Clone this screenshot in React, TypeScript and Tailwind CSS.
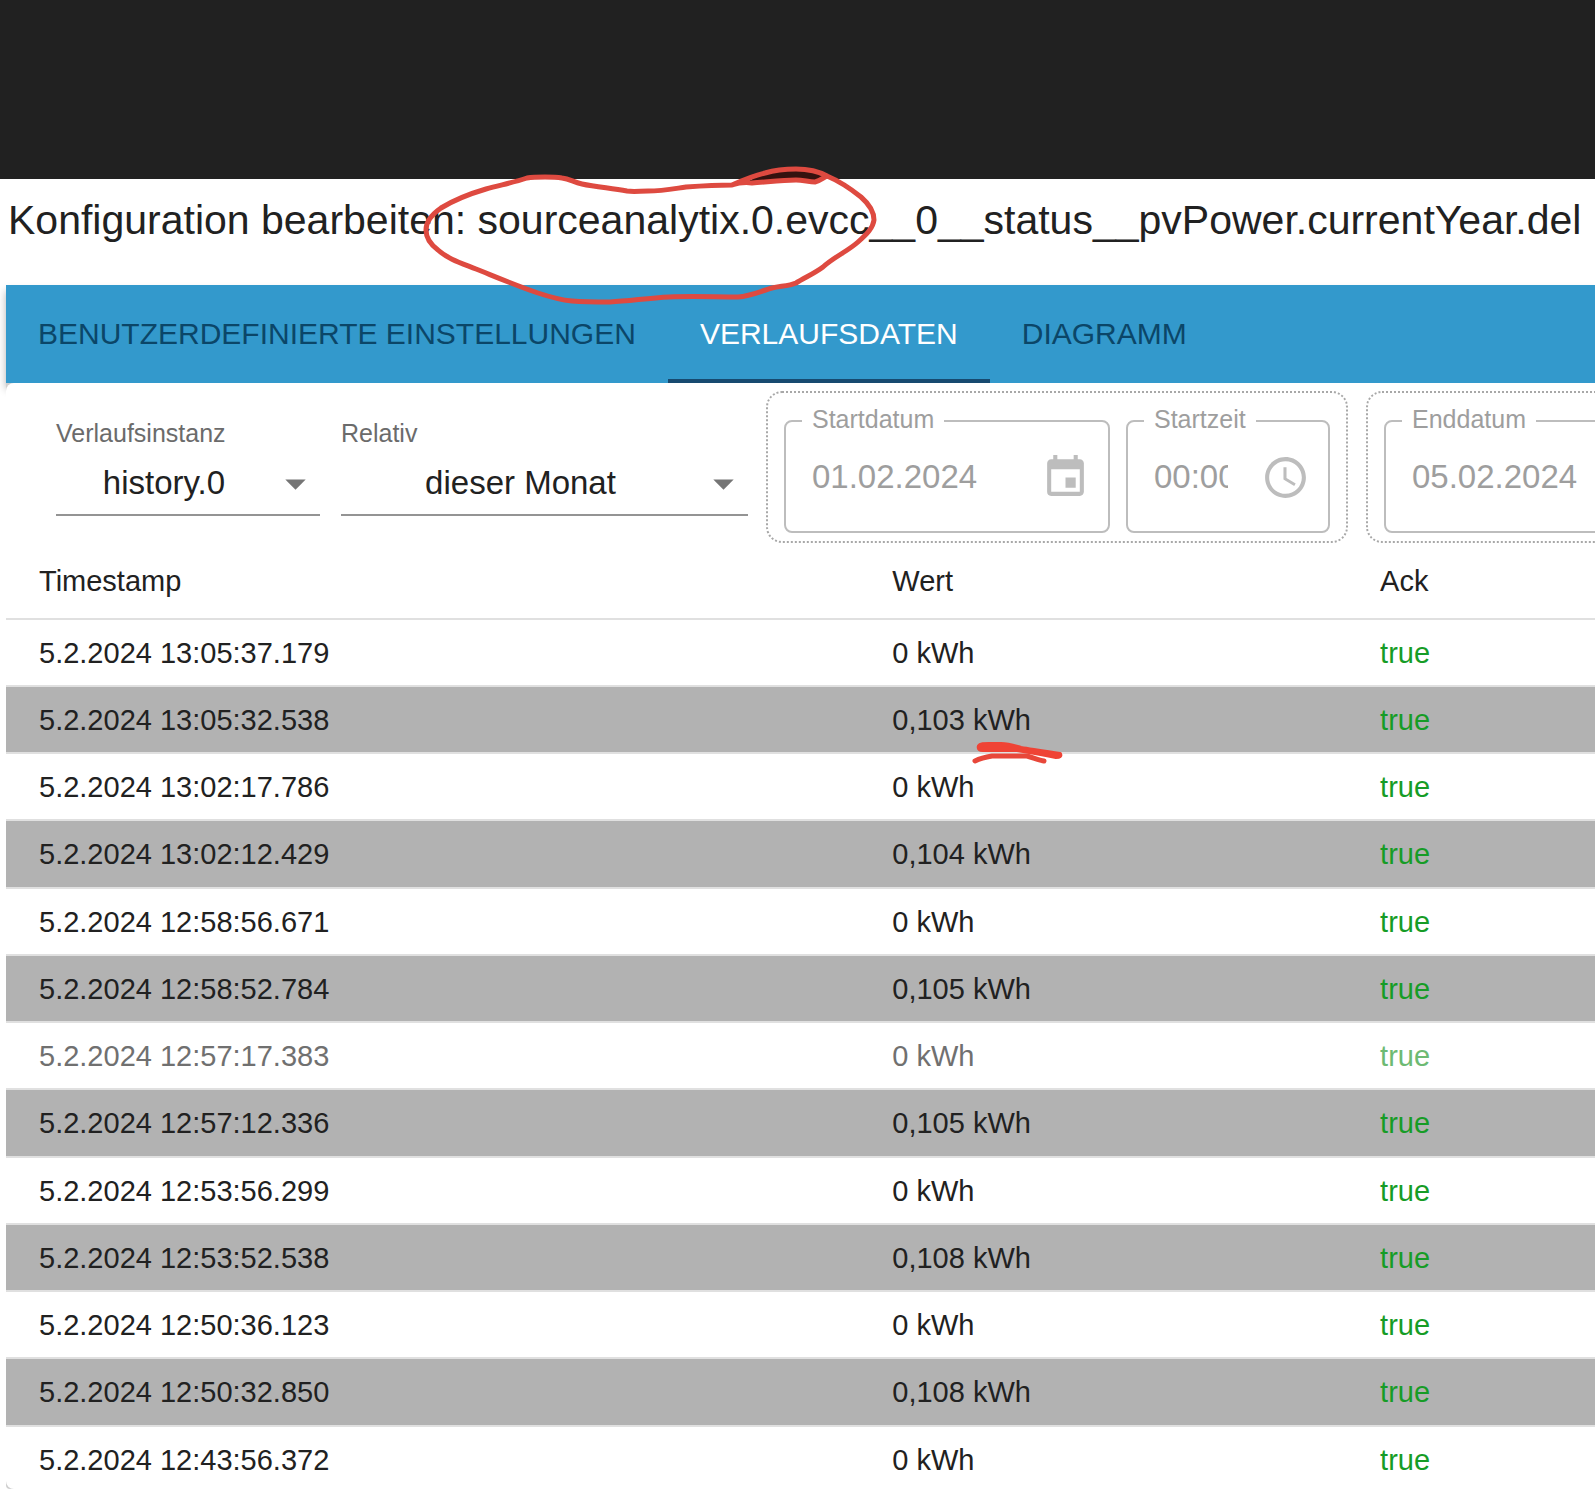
import type { ReactNode } from 'react'
import { MdAccessTime, MdArrowDropDown, MdEvent } from 'react-icons/md'

const tabs = ['BENUTZERDEFINIERTE EINSTELLUNGEN', 'VERLAUFSDATEN', 'DIAGRAMM']

const rows = [
  { ts: '5.2.2024 13:05:37.179', value: '0 kWh' },
  { ts: '5.2.2024 13:05:32.538', value: '0,103 kWh' },
  { ts: '5.2.2024 13:02:17.786', value: '0 kWh' },
  { ts: '5.2.2024 13:02:12.429', value: '0,104 kWh' },
  { ts: '5.2.2024 12:58:56.671', value: '0 kWh' },
  { ts: '5.2.2024 12:58:52.784', value: '0,105 kWh' },
  { ts: '5.2.2024 12:57:17.383', value: '0 kWh', faded: true },
  { ts: '5.2.2024 12:57:12.336', value: '0,105 kWh' },
  { ts: '5.2.2024 12:53:56.299', value: '0 kWh' },
  { ts: '5.2.2024 12:53:52.538', value: '0,108 kWh' },
  { ts: '5.2.2024 12:50:36.123', value: '0 kWh' },
  { ts: '5.2.2024 12:50:32.850', value: '0,108 kWh' },
  { ts: '5.2.2024 12:43:56.372', value: '0 kWh' },
]

function SelectField({ id, label, value, className }: { id: string; label: string; value: string; className: string }) {
  return (
    <div className={`shrink-0 pt-7 ${className}`}>
      <label htmlFor={id} className="block text-[25px] leading-7 text-[#6b6b6b]">
        {label}
      </label>
      <div className="relative">
        <select
          id={id}
          className="block h-[69px] w-full appearance-none border-b-2 border-[#949494] bg-transparent pt-1 pr-12 text-center text-[33px] text-[#212121] outline-none"
        >
          <option>{value}</option>
        </select>
        <MdArrowDropDown size={49} className="pointer-events-none absolute top-3 right-0 text-[#757575]" />
      </div>
    </div>
  )
}

function PickerField({ id, label, value, inputClass, children }: {
  id: string
  label: string
  value: string
  inputClass: string
  children: ReactNode
}) {
  return (
    <fieldset className="shrink-0 rounded-lg border-2 border-[#bdbdbd] pr-[18px] pb-[14px] pl-0">
      <legend className="ml-4 px-[10px] pb-1 text-[25px] leading-7 text-[#9e9e9e]">
        <label htmlFor={id}>{label}</label>
      </legend>
      <div className="flex h-20 items-center pl-[26px]">
        <input
          id={id}
          type="text"
          defaultValue={value}
          disabled
          className={`bg-transparent text-[33px] leading-10 text-[#9e9e9e] ${inputClass}`}
        />
        {children}
      </div>
    </fieldset>
  )
}

function DateTimeGroup({ name, date, time }: { name: string; date: string; time?: string }) {
  return (
    <div className={`flex gap-4 rounded-2xl border-2 border-dotted border-[#a8a8a8] px-4 pt-3 pb-2 ${time ? 'shrink-0' : 'w-[583px] shrink-0'}`}>
      <PickerField id={`${name}-date`} label={`${name}datum`} value={date} inputClass="w-[229px]">
        <MdEvent size={49} className="text-[#bdbdbd]" />
      </PickerField>
      {time && (
        <PickerField id={`${name}-time`} label={`${name}zeit`} value={time} inputClass="mr-[33px] w-[74px]">
          <MdAccessTime size={49} className="text-[#bdbdbd]" />
        </PickerField>
      )}
    </div>
  )
}

/* Red pen marks on top of the dialog */
function PenMarks() {
  return (
    <svg
      className="pointer-events-none absolute top-0 left-0 z-20"
      width="1100"
      height="800"
      viewBox="0 0 1100 800"
      fill="none"
      strokeLinecap="round"
      strokeLinejoin="round"
      aria-hidden="true"
    >
      <path d="M748 181C765 173 782 171 796 171C808 171 818 173 826 176L815 181C795 179 770 182 748 181Z" fill="#35120f" />
      <path
        d="M732 185C716 185 700 186 686 187C672 189 662 191 648 191C640 191 634 192 627 191C610 188 596 187 582 184C573 182 570 179 562 178C556 177 551 177 545 177C539 177 533 177 527 178C512 183 500 185 486 189C469 194 454 200 441 208C431 215 426 222 426 230C426 238 430 244 438 250C448 259 461 263 476 269C496 277 517 286 538 293C550 297 561 300 572 301C585 302 598 302 610 302C630 301 648 298 669 297C692 296 715 297 738 297C751 296 761 291 772 288C781 286 789 286 796 283C806 277 815 273 823 267C834 257 848 251 858 242C867 234 873 228 874 220C874 212 869 204 861 197C851 189 839 181 827 176C818 171 807 169 796 169C785 169 775 170 765 173C752 176 743 180 732 185C738 183 745 182 752 183C767 182 782 180 796 180C803 180 809 182 815 182C820 181 823 178 827 176"
        stroke="#de4a40"
        strokeWidth="5"
      />
      <path d="M979 746C980 744 984 744 989 744H1001C1009 744 1014 746 1021 748C1034 750 1046 752 1060 754C1061 756 1060 757 1056 757C1042 754 1030 752 1017 750H983C980 750 978 749 979 746Z" fill="#ef4335" stroke="#ef4335" strokeWidth="4" />
      <path d="M975 761C981 758 986 757 992 756H1027C1034 758 1039 760 1044 761" stroke="#e8473a" strokeWidth="5" />
    </svg>
  )
}

export default function App() {
  return (
    <div className="relative flex h-screen flex-col overflow-hidden bg-white font-['Liberation_Sans',Arial,sans-serif] text-[#212121]">
      <div className="h-[179px] shrink-0 bg-[#212121]" />

      <h1 className="h-[106px] shrink-0 overflow-hidden pt-[13px] pl-2 text-[41px] leading-14 whitespace-nowrap">
        Konfiguration bearbeiten: sourceanalytix.0.evcc__0__status__pvPower.currentYear.del
      </h1>

      <div className="flex min-h-0 flex-1 flex-col pb-[19px] pl-[6px]">
        {/* Tabs */}
        <div role="tablist" className="flex h-[98px] shrink-0 bg-[#3399cc] shadow-[0_6px_8px_rgba(0,0,0,0.3)]">
          {tabs.map((tab, i) => (
            <button
              key={tab}
              type="button"
              role="tab"
              aria-selected={i === 1}
              className={`border-b-4 px-8 pt-0.5 text-[30px] whitespace-nowrap ${
                i === 1 ? 'border-[#174a70] text-white' : 'border-transparent text-[#0b4668]'
              }`}
            >
              {tab}
            </button>
          ))}
        </div>

        <div className="relative min-h-0 flex-1 rounded-bl-sm bg-[#cfcfcf]">
          <div className="h-full overflow-hidden rounded-l-lg bg-white">
            {/* Filter */}
            <div className="flex gap-[18px] pt-2 pl-[50px]">
              <div className="flex shrink-0 gap-[21px]">
                <SelectField id="instance" label="Verlaufsinstanz" value="history.0" className="w-[264px]" />
                <SelectField id="relative" label="Relativ" value="dieser Monat" className="w-[407px]" />
              </div>
              <DateTimeGroup name="Start" date="01.02.2024" time="00:00" />
              <DateTimeGroup name="End" date="05.02.2024" />
            </div>

            {/* History entries */}
            <table className="w-full table-fixed border-collapse text-left text-[29px] leading-10">
              <thead>
                <tr className="h-[76px] border-b-2 border-[#e0e0e0]">
                  <th className="w-[53.7%] pl-[33px] font-normal">Timestamp</th>
                  <th className="w-[30.7%] pl-[33px] font-normal">Wert</th>
                  <th className="pl-[33px] font-normal">Ack</th>
                </tr>
              </thead>
              <tbody>
                {rows.map((row) => (
                  <tr key={row.ts} className="h-[67px] border-b-2 border-[#e0e0e0] nth-[4n]:h-[68px] even:bg-[#b2b2b2]">
                    <td className={`pl-[33px] ${row.faded ? 'text-[#707070]' : ''}`}>{row.ts}</td>
                    <td className={`pl-[33px] ${row.faded ? 'text-[#707070]' : ''}`}>{row.value}</td>
                    <td className={`pl-[33px] ${row.faded ? 'text-[#6dba73]' : 'text-[#169c26]'}`}>true</td>
                  </tr>
                ))}
              </tbody>
            </table>
          </div>
        </div>
      </div>

      <PenMarks />
    </div>
  )
}
